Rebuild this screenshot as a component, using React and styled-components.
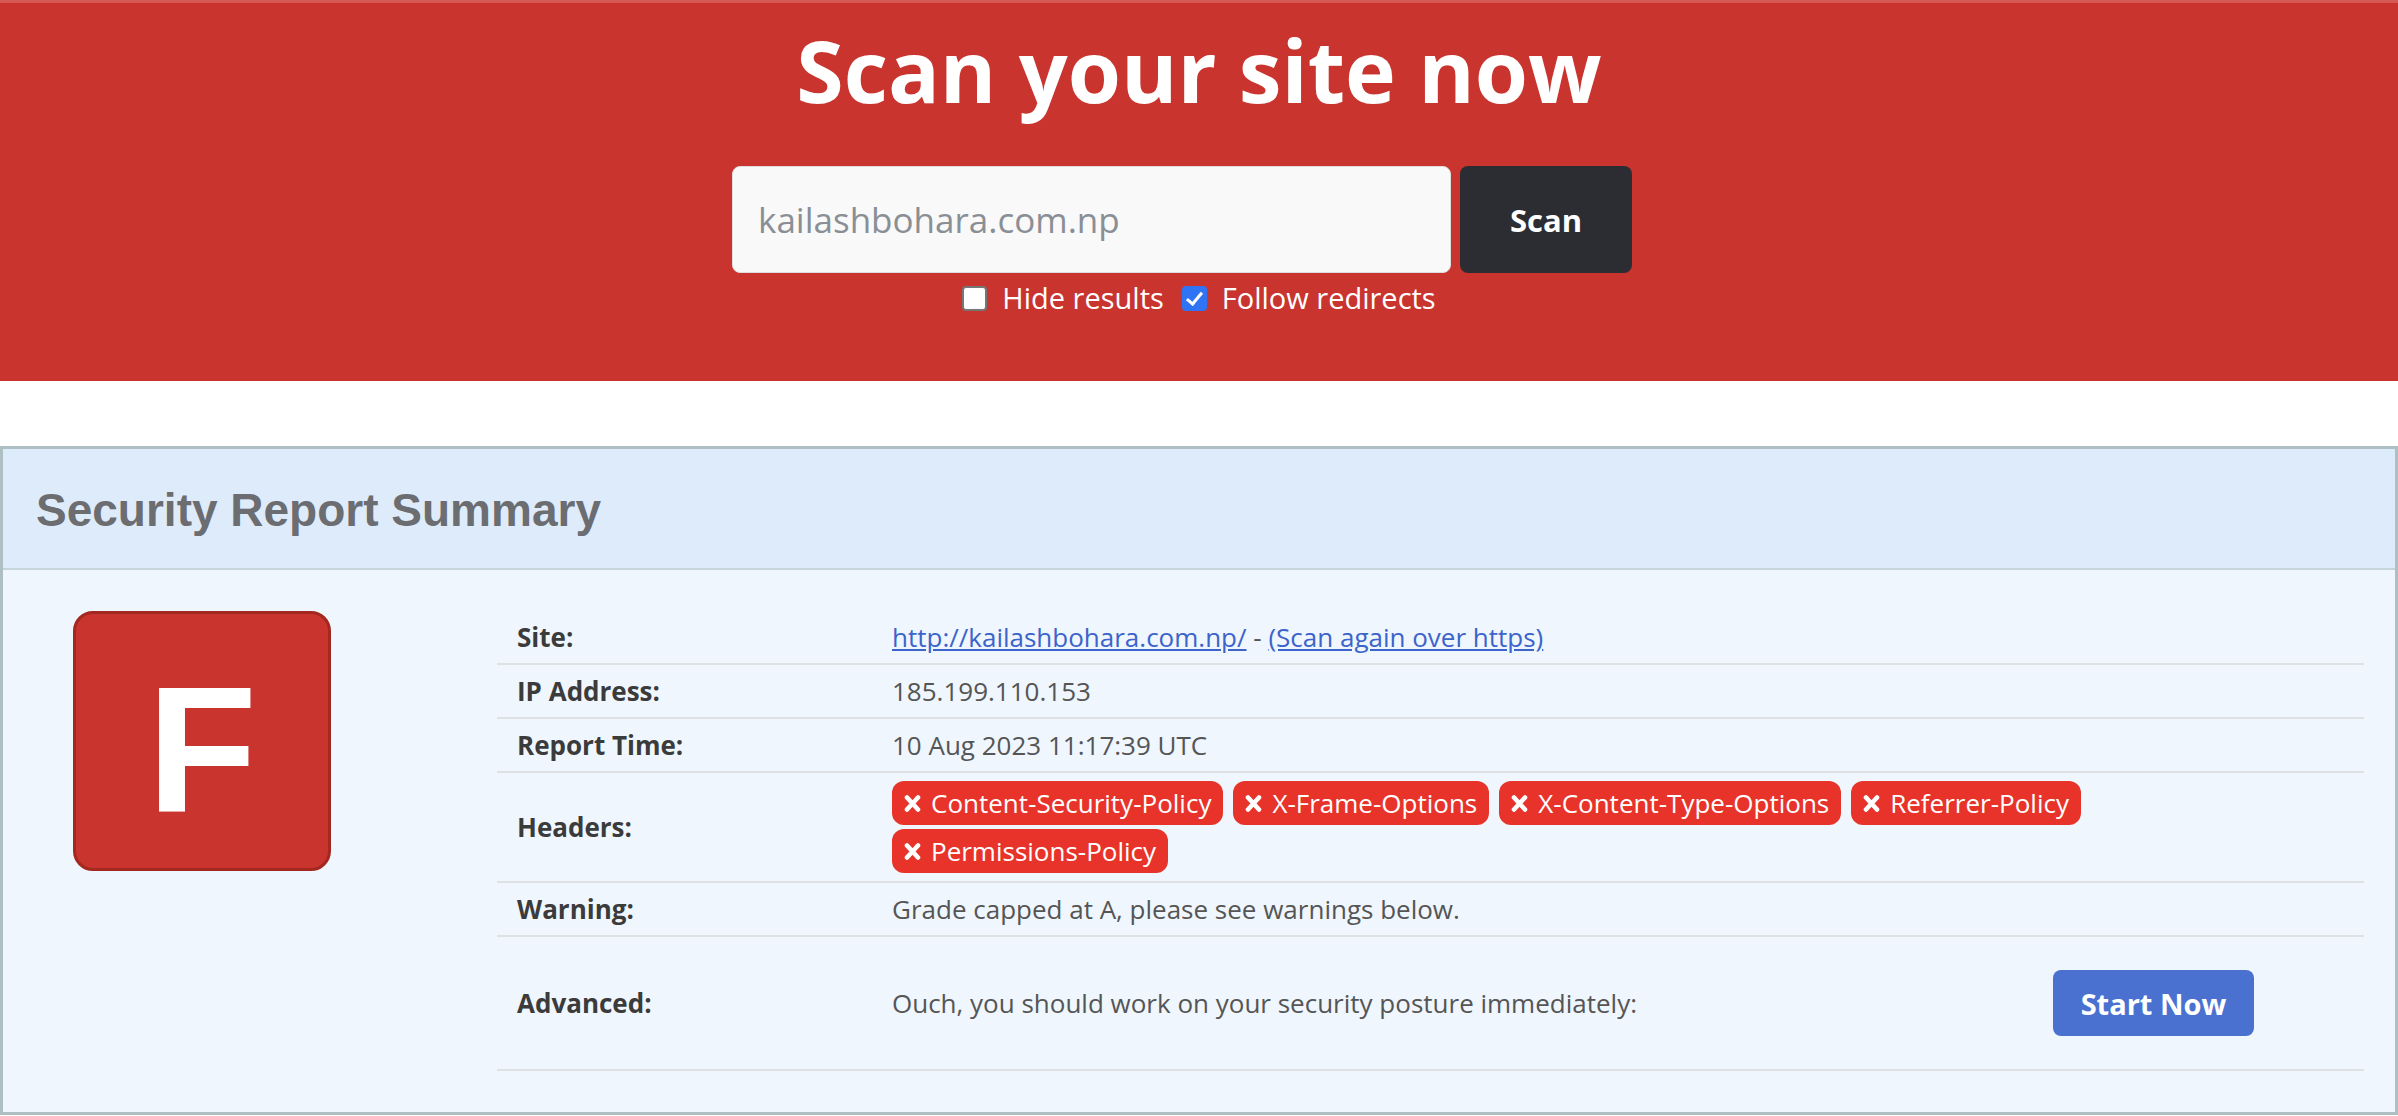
import React from 'react';
import styled, { createGlobalStyle } from 'styled-components';

const GlobalStyle = createGlobalStyle`
  body {
    margin: 0;
    background: #fff;
    font-family: 'Open Sans', 'Noto Sans', sans-serif;
  }
`;

const Hero = styled.header`
  background: #c9342e;
  border-top: 3px solid #d65a53;
  padding: 19px 0 64px;
  display: flex;
  flex-direction: column;
  align-items: center;
`;

const Title = styled.h1`
  margin: 0;
  font-size: 86px;
  line-height: 96px;
  font-weight: 700;
  color: #fff;
`;

const ScanForm = styled.form`
  display: flex;
  gap: 9px;
  margin-top: 48px;
  margin-right: 34px;
`;

const UrlInput = styled.input`
  width: 719px;
  height: 107px;
  box-sizing: border-box;
  border: 1px solid #dedede;
  border-radius: 8px;
  background: #f9f9f9;
  padding: 0 25px;
  font: 35px 'Open Sans', sans-serif;
  color: #333;
  outline: none;
  &::placeholder { color: #8a8f96; }
`;

const ScanButton = styled.button`
  width: 172px;
  height: 107px;
  border: 0;
  border-radius: 8px;
  background: #2b2d32;
  color: #fff;
  font: 700 31px 'Open Sans', sans-serif;
`;

const Options = styled.div`
  display: flex;
  align-items: center;
  margin-top: 6px;
  color: #fff;
  font-size: 29px;
  line-height: 38px;
`;

const Option = styled.label`
  display: flex;
  align-items: center;
  gap: 15px;
  & + & { margin-left: 18px; }
`;

const Check = styled.input.attrs({ type: 'checkbox' })`
  appearance: none;
  margin: 0;
  width: 25px;
  height: 25px;
  box-sizing: border-box;
  border-radius: 4px;
  border: 2px solid #767676;
  background: #fff;
  position: relative;
  &:checked {
    background: #2f74f5;
    border-color: #2f74f5;
  }
  &:checked::after {
    content: '';
    position: absolute;
    left: 6px;
    top: 1px;
    width: 6px;
    height: 13px;
    border: solid #fff;
    border-width: 0 3px 3px 0;
    transform: rotate(40deg);
  }
`;

const Card = styled.section`
  margin-top: 65px;
  border: 3px solid #adbfc3;
  background: #eff6fd;
`;

const CardHeader = styled.div`
  background: #deebfb;
  border-bottom: 2px solid #c6d4dc;
  padding: 34px 33px 30px;
`;

const CardTitle = styled.h2`
  margin: 0;
  font: 700 46px/55px 'Liberation Sans', Arial, sans-serif;
  color: #6b6d71;
`;

const CardBody = styled.div`
  display: flex;
  align-items: flex-start;
  padding: 41px 31px 41px 0;
`;

const GradeCol = styled.div`
  width: 494px;
  flex: none;
  padding-left: 70px;
  box-sizing: border-box;
`;

const Grade = styled.div`
  width: 258px;
  height: 260px;
  box-sizing: border-box;
  border: 3px solid #a3281f;
  border-radius: 20px;
  background: #c9342e;
  color: #fff;
  display: flex;
  align-items: center;
  justify-content: center;
  padding-top: 16px;
  font: 700 180px 'Liberation Sans', Arial, sans-serif;
`;

const TableWrap = styled.div`
  flex: 1;
`;

const Table = styled.table`
  width: 100%;
  border-collapse: collapse;
  font-size: 26px;
  line-height: 36px;
`;

const Row = styled.tr`
  border-bottom: 2px solid #dfe2e5;
`;

const Label = styled.th`
  width: 335px;
  text-align: left;
  padding: 8px 20px;
  font-weight: 700;
  color: #3b3b3b;
  vertical-align: middle;
`;

const Value = styled.td`
  padding: 8px 20px;
  color: #555;
  vertical-align: middle;
`;

const Link = styled.a`
  color: #3c64cb;
  text-decoration: underline;
`;

const Badges = styled.div`
  display: flex;
  flex-wrap: wrap;
  gap: 4px 10px;
`;

const Badge = styled.span`
  display: inline-flex;
  align-items: center;
  gap: 10px;
  height: 44px;
  padding: 0 12px 0 12px;
  border-radius: 12px;
  background: #e8332a;
  color: #fff;
  font-size: 26px;
`;

const XIcon = () => (
  <svg width="17" height="19" viewBox="0 0 17 19">
    <path d="M3 3.5 L14 15.5 M14 3.5 L3 15.5" stroke="#fff" strokeWidth="4.6" strokeLinecap="round" />
  </svg>
);

const Advanced = styled.div`
  display: flex;
  align-items: center;
  justify-content: space-between;
`;

const StartButton = styled.button`
  width: 201px;
  height: 66px;
  margin: 25px 90px 25px 0;
  border: 0;
  border-radius: 8px;
  background: #4a71d0;
  color: #fff;
  font: 700 29px 'Open Sans', sans-serif;
`;

const missing = [
  'Content-Security-Policy',
  'X-Frame-Options',
  'X-Content-Type-Options',
  'Referrer-Policy',
  'Permissions-Policy',
];

export default function App() {
  return (
    <>
      <GlobalStyle />
      <Hero>
        <Title>Scan your site now</Title>
        <ScanForm onSubmit={e => e.preventDefault()}>
          <UrlInput placeholder="kailashbohara.com.np" />
          <ScanButton>Scan</ScanButton>
        </ScanForm>
        <Options>
          <Option><Check />Hide results</Option>
          <Option><Check defaultChecked />Follow redirects</Option>
        </Options>
      </Hero>

      <Card>
        <CardHeader>
          <CardTitle>Security Report Summary</CardTitle>
        </CardHeader>
        <CardBody>
          <GradeCol>
            <Grade>F</Grade>
          </GradeCol>
          <TableWrap>
            <Table>
              <tbody>
                <Row>
                  <Label>Site:</Label>
                  <Value>
                    <Link href="#">http://kailashbohara.com.np/</Link> - <Link href="#">(Scan again over https)</Link>
                  </Value>
                </Row>
                <Row>
                  <Label>IP Address:</Label>
                  <Value>185.199.110.153</Value>
                </Row>
                <Row>
                  <Label>Report Time:</Label>
                  <Value>10 Aug 2023 11:17:39 UTC</Value>
                </Row>
                <Row>
                  <Label>Headers:</Label>
                  <Value>
                    <Badges>
                      {missing.map(h => (
                        <Badge key={h}><XIcon />{h}</Badge>
                      ))}
                    </Badges>
                  </Value>
                </Row>
                <Row>
                  <Label>Warning:</Label>
                  <Value>Grade capped at A, please see warnings below.</Value>
                </Row>
                <Row>
                  <Label>Advanced:</Label>
                  <Value>
                    <Advanced>
                      <span>Ouch, you should work on your security posture immediately:</span>
                      <StartButton>Start Now</StartButton>
                    </Advanced>
                  </Value>
                </Row>
              </tbody>
            </Table>
          </TableWrap>
        </CardBody>
      </Card>
    </>
  );
}
